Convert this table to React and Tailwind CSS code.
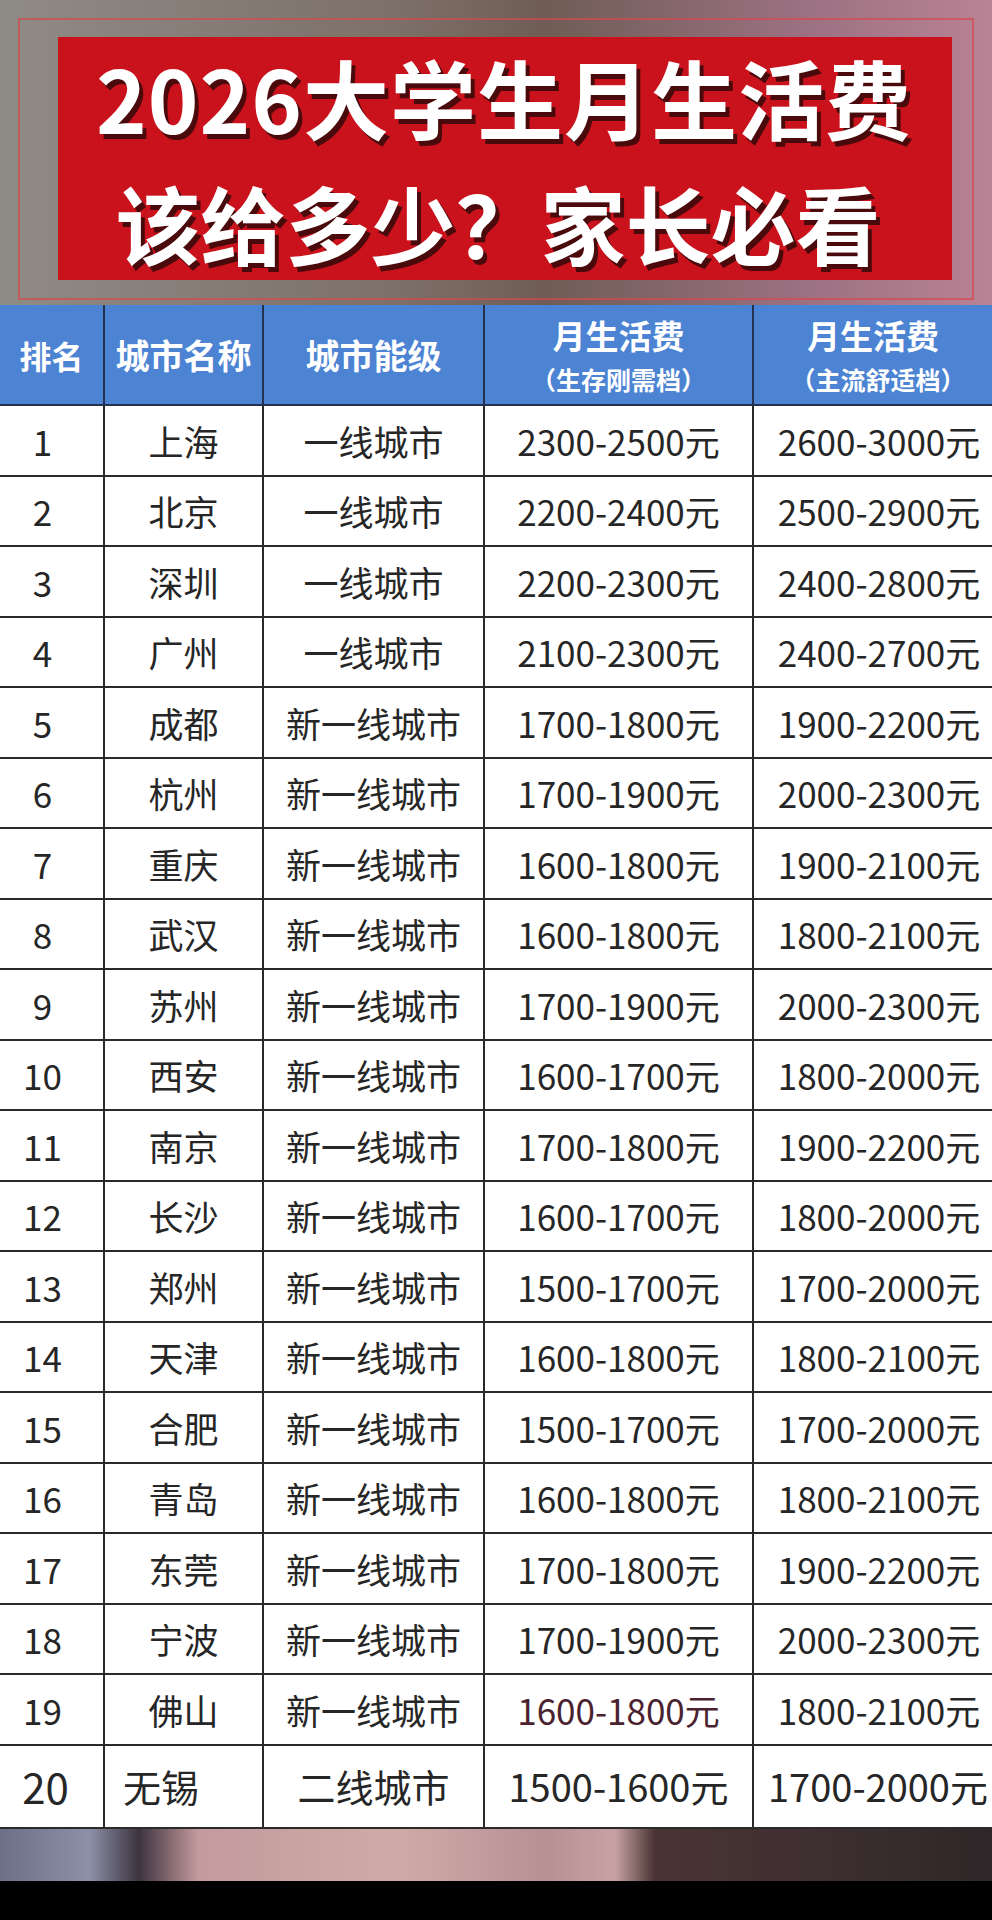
import React from "react";

const rows = [
  ["1", "上海", "一线城市", "2300-2500元", "2600-3000元"],
  ["2", "北京", "一线城市", "2200-2400元", "2500-2900元"],
  ["3", "深圳", "一线城市", "2200-2300元", "2400-2800元"],
  ["4", "广州", "一线城市", "2100-2300元", "2400-2700元"],
  ["5", "成都", "新一线城市", "1700-1800元", "1900-2200元"],
  ["6", "杭州", "新一线城市", "1700-1900元", "2000-2300元"],
  ["7", "重庆", "新一线城市", "1600-1800元", "1900-2100元"],
  ["8", "武汉", "新一线城市", "1600-1800元", "1800-2100元"],
  ["9", "苏州", "新一线城市", "1700-1900元", "2000-2300元"],
  ["10", "西安", "新一线城市", "1600-1700元", "1800-2000元"],
  ["11", "南京", "新一线城市", "1700-1800元", "1900-2200元"],
  ["12", "长沙", "新一线城市", "1600-1700元", "1800-2000元"],
  ["13", "郑州", "新一线城市", "1500-1700元", "1700-2000元"],
  ["14", "天津", "新一线城市", "1600-1800元", "1800-2100元"],
  ["15", "合肥", "新一线城市", "1500-1700元", "1700-2000元"],
  ["16", "青岛", "新一线城市", "1600-1800元", "1800-2100元"],
  ["17", "东莞", "新一线城市", "1700-1800元", "1900-2200元"],
  ["18", "宁波", "新一线城市", "1700-1900元", "2000-2300元"],
  ["19", "佛山", "新一线城市", "1600-1800元", "1800-2100元"],
];

const font = { fontFamily: '"Noto Sans CJK SC", "Noto Sans", sans-serif' };

const App = () => {
  return (
    <div className="w-[992px] h-[1920px] flex flex-col bg-black overflow-hidden" style={font}>
      {/* banner over blurry photo */}
      <div className="h-[305px] shrink-0 bg-[linear-gradient(to_right,#8f8b86,#7d7068_40%,#6f5d55_55%,#9a7080_80%,#b88395)] pt-[18px] px-[18px]">
        <div className="h-[282px] border-2 border-[#d9474f]/70 pt-[17px] pl-[38px] pr-[20px] pb-[18px]">
          <div className="h-full bg-[#c9121c] flex flex-col items-center justify-center text-white font-bold [text-shadow:4px_5px_0_#4a0a0c]">
            <div className="text-[86px] leading-[125px] tracking-[1px] pr-[2px]">2026大学生月生活费</div>
            <div className="text-[85px] leading-[125px] pr-[14px]">该给多少？家长必看</div>
          </div>
        </div>
      </div>

      {/* table */}
      <table className="table-fixed w-[992px] border-collapse bg-white text-[#262626] shrink-0">
        <colgroup>
          <col className="w-[104px]" />
          <col className="w-[159px]" />
          <col className="w-[221px]" />
          <col className="w-[269px]" />
          <col className="w-[239px]" />
        </colgroup>
        <thead>
          <tr className="h-[100px] bg-[#4c83d3] text-white font-bold">
            <th className="border-x-2 border-b-2 border-[#22324f] border-l-0 text-[32px] font-bold">排名</th>
            <th className="border-x-2 border-b-2 border-[#22324f] text-[34px] font-bold">城市名称</th>
            <th className="border-x-2 border-b-2 border-[#22324f] text-[34px] font-bold">城市能级</th>
            <th className="border-x-2 border-b-2 border-[#22324f] font-bold">
              <div className="text-[33px] leading-[48px]">月生活费</div>
              <div className="text-[25px] leading-[40px]">（生存刚需档）</div>
            </th>
            <th className="border-l-2 border-b-2 border-[#22324f] font-bold">
              <div className="text-[33px] leading-[48px]">月生活费</div>
              <div className="text-[25px] leading-[40px] pl-[10px]">（主流舒适档）</div>
            </th>
          </tr>
        </thead>
        <tbody>
          {rows.map((r) => (
            <tr key={r[0]} className="h-[70.5px] text-[35px] leading-none">
              <td className="border-r-2 border-b-2 border-[#2a2a2a] text-center pr-[18px]">{r[0]}</td>
              <td className="border-x-2 border-b-2 border-[#2a2a2a] text-center">{r[1]}</td>
              <td className="border-x-2 border-b-2 border-[#2a2a2a] text-center">{r[2]}</td>
              <td className={`border-x-2 border-b-2 border-[#2a2a2a] text-center ${r[0] === "19" ? "text-[#4a2230]" : ""}`}>{r[3]}</td>
              <td className="border-l-2 border-b-2 border-[#2a2a2a] text-center pl-[12px] whitespace-nowrap">{r[4]}</td>
            </tr>
          ))}
          <tr className="h-[83px] text-[38px] leading-none">
            <td className="border-r-2 border-b-2 border-[#2a2a2a] text-center text-[42px] pr-[12px]">20</td>
            <td className="border-x-2 border-b-2 border-[#2a2a2a] text-left pl-[18px]">无锡</td>
            <td className="border-x-2 border-b-2 border-[#2a2a2a] text-center">二线城市</td>
            <td className="border-x-2 border-b-2 border-[#2a2a2a] text-center">1500-1600元</td>
            <td className="border-l-2 border-b-2 border-[#2a2a2a] text-center pl-[10px] whitespace-nowrap">1700-2000元</td>
          </tr>
        </tbody>
      </table>

      {/* photo strip and black bar */}
      <div className="h-[52px] shrink-0 bg-[linear-gradient(to_right,#6b7088,#8d90a8_9%,#3d3440_14%,#c49a9c_20%,#d0aaa8_40%,#b89094_55%,#c8a2a2_62%,#4a3434_66%,#3c2e30_85%,#2e2628)]" />
      <div className="flex-1 bg-black" />
    </div>
  );
};

export default App;
